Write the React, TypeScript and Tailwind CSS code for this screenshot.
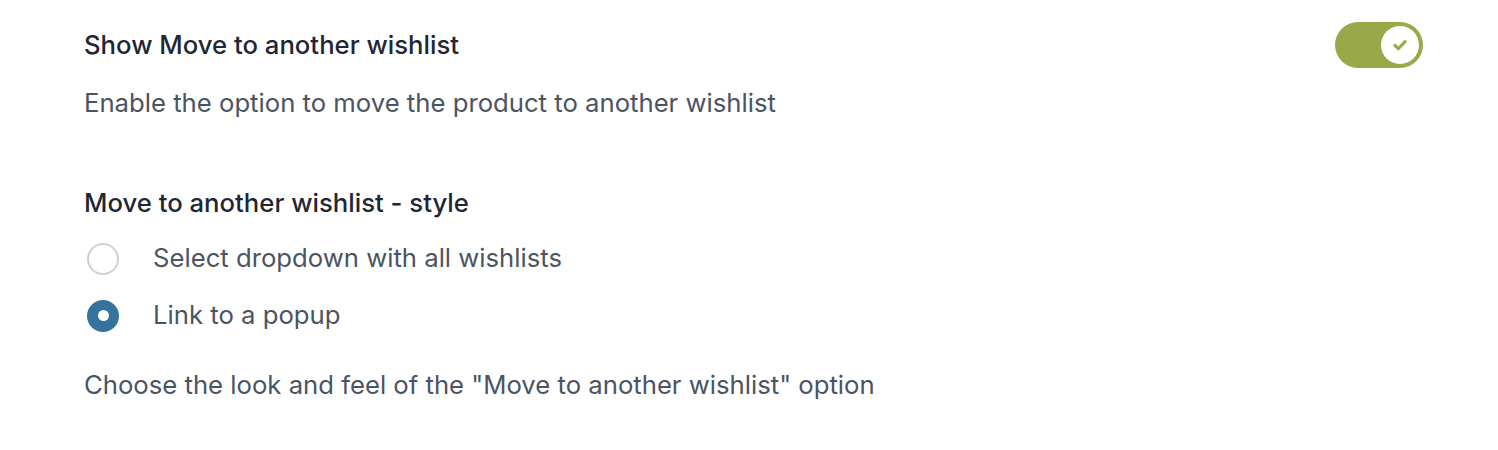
import React, { useState } from "react"

const font = { fontFamily: "Inter, 'Noto Sans', sans-serif" }

function Toggle({ on, onClick }: { on: boolean; onClick: () => void }) {
  return (
    <button
      onClick={onClick}
      className={`flex items-center w-[88px] h-[46px] rounded-full p-[4px] ${on ? "bg-[#99a94a] justify-end" : "bg-[#d1d5db] justify-start"}`}
    >
      <span className="flex items-center justify-center w-[38px] h-[38px] rounded-full bg-white">
        {on && (
          <svg width="18" height="18" viewBox="0 0 16 16" fill="none">
            <path d="M3.5 8.3l3 3 6-6.3" stroke="#99a94a" strokeWidth="2.8" strokeLinecap="round" strokeLinejoin="round" />
          </svg>
        )}
      </span>
    </button>
  )
}

function Radio({ checked, label, onClick }: { checked: boolean; label: string; onClick: () => void }) {
  return (
    <label onClick={onClick} className="flex items-center h-[57px] cursor-pointer">
      {checked ? (
        <span className="flex items-center justify-center w-[32px] h-[32px] rounded-full bg-[#33739c] ml-[3px]">
          <span className="w-[11px] h-[11px] rounded-full bg-white"></span>
        </span>
      ) : (
        <span className="w-[32px] h-[32px] rounded-full border-2 border-[#cdd1d7] bg-white ml-[3px]"></span>
      )}
      <span className="ml-[34px] text-[25.7px] text-[#4b5462]">{label}</span>
    </label>
  )
}

export default function App() {
  const [show, setShow] = useState(true)
  const [style, setStyle] = useState("popup")

  return (
    <div className="w-[1498px] h-[450px] bg-white pl-[84px] pr-[75px] pt-[22px]" style={font}>
      <div className="flex justify-between items-start">
        <div>
          <h3 className="text-[25.7px] leading-[46px] font-medium text-[#1f2734]">Show Move to another wishlist</h3>
          <p className="mt-[20px] text-[25.7px] leading-[30px] text-[#4b5462]">Enable the option to move the product to another wishlist</p>
        </div>
        <Toggle on={show} onClick={() => setShow(!show)} />
      </div>

      <h3 className="mt-[70px] text-[25.7px] leading-[30px] font-medium text-[#1f2734]">Move to another wishlist - style</h3>
      <div className="mt-[12px] flex flex-col">
        <Radio checked={style === "select"} label="Select dropdown with all wishlists" onClick={() => setStyle("select")} />
        <Radio checked={style === "popup"} label="Link to a popup" onClick={() => setStyle("popup")} />
      </div>
      <p className="mt-[26px] text-[25.7px] leading-[30px] text-[#4b5462]">Choose the look and feel of the "Move to another wishlist" option</p>
    </div>
  )
}
